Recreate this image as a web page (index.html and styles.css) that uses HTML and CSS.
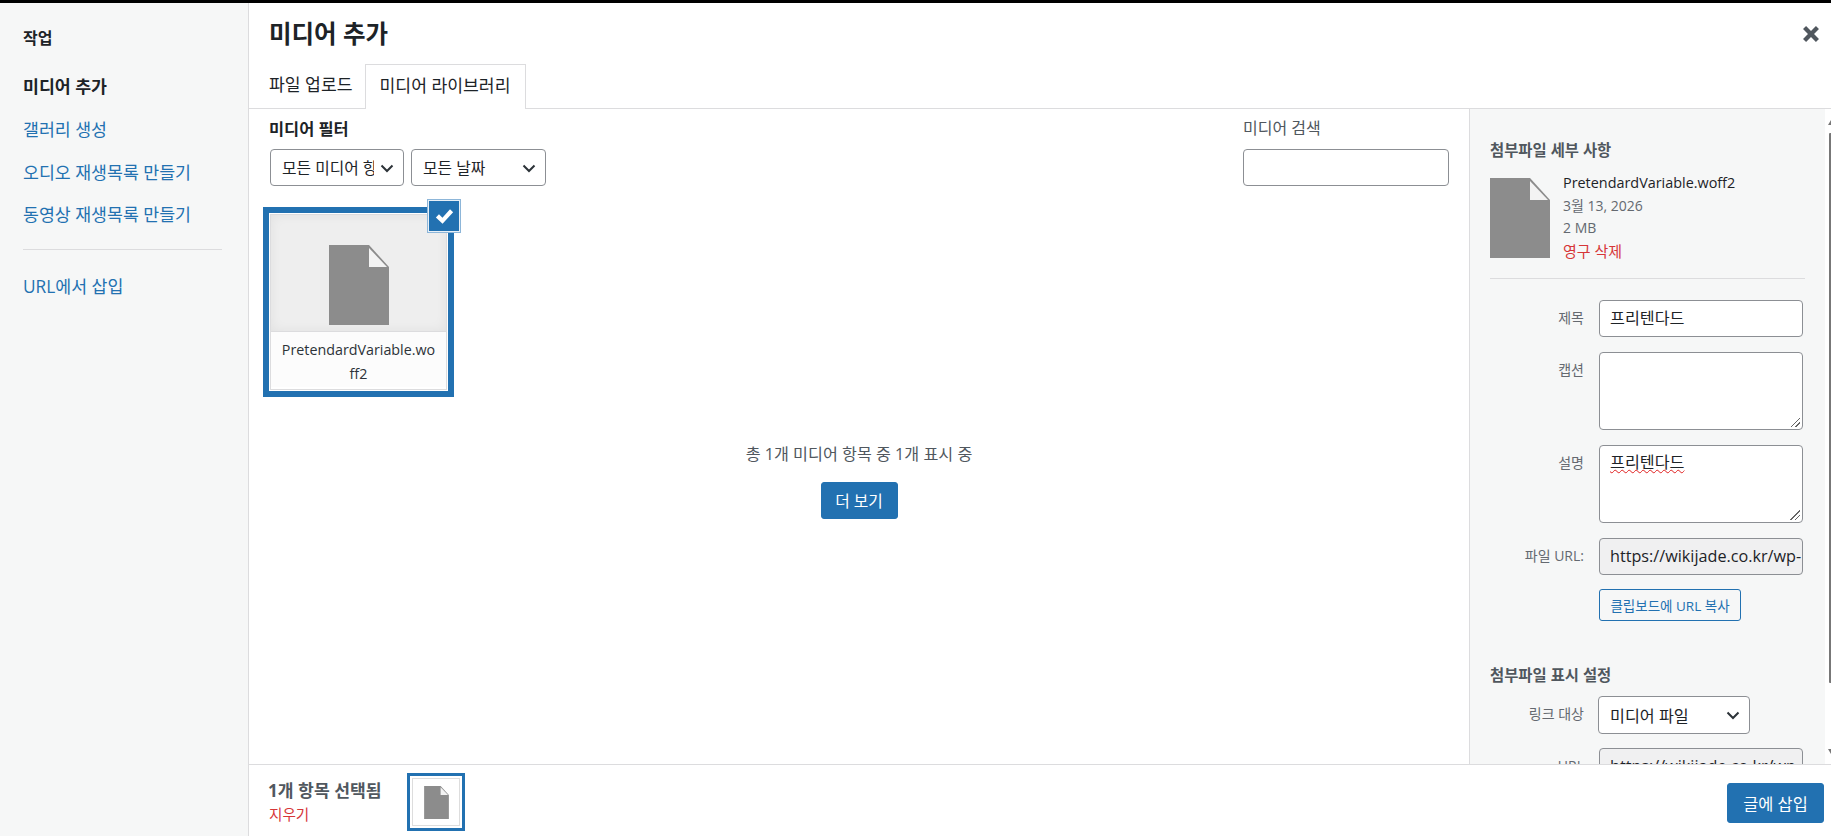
FILE: index.html
```html
<!DOCTYPE html>
<html lang="ko">
<head>
<meta charset="utf-8">
<title>미디어 추가</title>
<link rel="stylesheet" href="styles.css">
</head>
<body>
<div class="modal">
  <nav class="menu">
    <h2 class="menu-title">작업</h2>
    <a class="menu-item active">미디어 추가</a>
    <a class="menu-item">갤러리 생성</a>
    <a class="menu-item">오디오 재생목록 만들기</a>
    <a class="menu-item">동영상 재생목록 만들기</a>
    <div class="menu-sep"></div>
    <a class="menu-item">URL에서 삽입</a>
  </nav>
  <main class="frame">
    <header class="head">
      <h1 class="title">미디어 추가</h1>
      <button class="close" aria-label="닫기"><svg viewBox="0 0 16 16" width="22" height="22"><path d="M2.2 4.4 4.4 2.2 8 5.8l3.6-3.6 2.2 2.2L10.2 8l3.6 3.6-2.2 2.2L8 10.2l-3.6 3.6-2.2-2.2L5.8 8z"/></svg></button>
      <div class="tabs">
        <span class="tab">파일 업로드</span>
        <span class="tab current">미디어 라이브러리</span>
      </div>
    </header>
    <div class="content">
      <section class="browser">
        <div class="toolbar">
          <div class="filters">
            <h2 class="filter-title">미디어 필터</h2>
            <div class="filter-row">
              <div class="select sel-type"><span class="select-text">모든 미디어 항목</span><svg class="chev" viewBox="0 0 16 16"><path d="M2.5 5.5 8 11l5.5-5.5"/></svg></div>
              <div class="select sel-date"><span class="select-text">모든 날짜</span><svg class="chev" viewBox="0 0 16 16"><path d="M2.5 5.5 8 11l5.5-5.5"/></svg></div>
            </div>
          </div>
          <div class="search">
            <label class="search-label">미디어 검색</label>
            <div class="input search-input"></div>
          </div>
        </div>
        <div class="attachment">
          <div class="att-inner">
            <div class="att-preview">
              <svg class="file big" viewBox="0 0 60 80"><path class="f" d="M0 0h40l20 22v58H0z"/><path class="w" d="M40 3v19h18z"/></svg>
            </div>
            <div class="att-name">PretendardVariable.wo<br>ff2</div>
          </div>
          <span class="check"><svg viewBox="0 0 20 20" width="23" height="23"><path d="M2.5 10.8 5.2 8l3 3 6.6-7.3 2.7 2.6-9.2 10z"/></svg></span>
        </div>
        <div class="load-more">
          <p class="count">총 1개 미디어 항목 중 1개 표시 중</p>
          <button class="btn more">더 보기</button>
        </div>
      </section>
      <aside class="details">
        <h2 class="side-title">첨부파일 세부 사항</h2>
        <div class="info">
          <svg class="file info-thumb" viewBox="0 0 60 80"><path class="f" d="M0 0h40l20 22v58H0z"/><path class="w" d="M40 3v19h18z"/></svg>
          <div class="info-text">
            <div class="info-name">PretendardVariable.woff2</div>
            <div class="info-meta">3월 13, 2026</div>
            <div class="info-meta">2 MB</div>
            <a class="danger">영구 삭제</a>
          </div>
        </div>
        <div class="field">
          <label class="lbl">제목</label>
          <div class="input box one">프리텐다드</div>
        </div>
        <div class="field">
          <label class="lbl">캡션</label>
          <div class="input box area"><span class="grip"></span></div>
        </div>
        <div class="field">
          <label class="lbl">설명</label>
          <div class="input box area"><span class="spell">프리텐다드</span><span class="grip"></span></div>
        </div>
        <div class="field">
          <label class="lbl">파일 URL:</label>
          <div class="input box one ro">https://wikijade.co.kr/wp-</div>
        </div>
        <div class="copy-row"><button class="btn-copy">클립보드에 URL 복사</button></div>
        <h2 class="side-title second">첨부파일 표시 설정</h2>
        <div class="field tight">
          <label class="lbl">링크 대상</label>
          <div class="select sel-link"><span class="select-text">미디어 파일</span><svg class="chev" viewBox="0 0 16 16"><path d="M2.5 5.5 8 11l5.5-5.5"/></svg></div>
        </div>
        <div class="field last">
          <label class="lbl">URL</label>
          <div class="input box one ro">https://wikijade.co.kr/wp-</div>
        </div>
      </aside>
      <div class="scrollbar">
        <span class="arrow up"></span>
        <span class="thumb"></span>
        <span class="arrow down"></span>
      </div>
    </div>
    <footer class="foot">
      <div class="sel-info">
        <div class="sel-count">1개 항목 선택됨</div>
        <a class="danger small">지우기</a>
      </div>
      <div class="sel-thumb"><svg class="file" viewBox="0 0 60 80" width="25" height="33"><path class="f" d="M0 0h40l20 22v58H0z"/><path class="w" d="M40 3v19h18z"/></svg></div>
      <button class="btn insert">글에 삽입</button>
    </footer>
  </main>
</div>
</body>
</html>
```
FILE: styles.css
```css
* { box-sizing: border-box; }
html, body { margin: 0; height: 100%; }
body {
  font-family: "Open Sans", "Noto Sans CJK KR", sans-serif;
  font-size: 15px;
  color: #1d2327;
  background: #fff;
  overflow: hidden;
}
h1, h2, p { margin: 0; }
.modal { display: flex; height: 836px; border-top: 3px solid #000; }

.menu { width: 249px; flex: none; background: #f6f7f7; border-right: 1px solid #dcdcde; padding: 24px 26px 0 23px; }
.menu-title { font-size: 16px; font-weight: 700; line-height: 22px; margin-bottom: 26px; }
.menu-item { display: block; font-size: 17.3px; line-height: 24px; color: #2271b1; margin-bottom: 18.8px; }
.menu-item.active { color: #1d2327; font-weight: 700; }
.menu-sep { height: 1px; background: #dcdcde; margin: 22px 0 25px; }

.frame { flex: 1; min-width: 0; display: flex; flex-direction: column; }
.head { position: relative; height: 106px; border-bottom: 1px solid #dcdcde; padding-left: 20px; flex: none; }
.title { font-size: 24.5px; font-weight: 700; line-height: 36px; padding-top: 13px; height: 61px; }
.close { position: absolute; top: 20px; right: 9px; width: 22px; height: 22px; padding: 0; border: 0; background: none; }
.close svg { display: block; fill: #50575e; }
.tabs { display: flex; height: 45px; }
.tab { font-size: 17.2px; line-height: 24px; padding: 9px 13px 0 0; height: 45px; }
.tab.current { padding: 9px 14px 0; background: #fff; border: 1px solid #dcdcde; border-bottom: 0; margin-left: -1px; }

.content { flex: 1; min-height: 0; display: flex; overflow: hidden; }
.browser { flex: 1; min-width: 0; }
.toolbar { display: flex; justify-content: space-between; padding: 0 20px 0 21px; height: 92px; }
.filter-title { font-size: 16.4px; font-weight: 700; line-height: 22px; padding-top: 9px; height: 40px; margin-left: -1px; }
.filter-row { display: flex; gap: 7px; }
.select { display: flex; align-items: center; height: 37px; border: 1px solid #8c8f94; border-radius: 4px; background: #fff; font-size: 15.8px; padding: 0 8px 0 11px; }
.select-text { flex: 1; min-width: 0; white-space: nowrap; overflow: hidden; }
.chev { width: 16px; height: 16px; flex: none; fill: none; stroke: #2c3338; stroke-width: 2; margin-left: 5px; }
.sel-type { width: 134px; }
.sel-date { width: 135px; }
.search { width: 206px; padding-top: 8px; }
.search-label { display: block; font-size: 16px; line-height: 22px; color: #50575e; height: 32px; }
.input { border: 1px solid #8c8f94; border-radius: 4px; background: #fff; }
.search-input { height: 37px; }

.attachment { position: relative; width: 191px; height: 190px; border: 6px solid #2271b1; margin: 6px 0 0 14px; background: #fff; }
.att-inner { height: 100%; border: 1px solid #fff; outline: 1px solid #dcdcde; outline-offset: -2px; padding: 1px; }
.att-preview { height: 117px; background: #eee; box-shadow: inset 0 0 12px rgba(0,0,0,.06); display: flex; align-items: flex-end; justify-content: center; padding-bottom: 6px; border-bottom: 1px solid #dcdcde; }
.att-name { font-size: 14.3px; font-weight: 500; text-align: center; line-height: 23.5px; padding-top: 6px; background: #fcfcfc; height: 55px; color: #2c3338; }
.file .f { fill: #8c8c8c; }
.file .w { fill: #f3f3f3; }
.big { width: 60px; height: 80px; }
.check { position: absolute; top: -14px; right: -13px; width: 34px; height: 34px; background: #2271b1; border: 1px solid #8db6d9; box-shadow: inset 0 0 0 1px #e8f0f7; display: flex; align-items: center; justify-content: center; }
.check svg { fill: #fff; }

.load-more { text-align: center; padding-top: 46px; }
.count { font-size: 16.2px; line-height: 22px; color: #50575e; }
.btn { background: #2271b1; color: #fff; border: 1px solid #2271b1; border-radius: 3px; font: inherit; }
.more { width: 77px; height: 37px; font-size: 15.8px; margin-top: 17px; }

.details { width: 356px; flex: none; background: #f6f7f7; border-left: 1px solid #dcdcde; padding: 0 20px; overflow: hidden; }
.side-title { font-size: 15.4px; font-weight: 700; line-height: 20px; color: #50575e; padding-top: 32px; }
.info { display: flex; gap: 13px; padding: 17px 0 15px; border-bottom: 1px solid #dcdcde; }
.info-thumb { width: 60px; height: 80px; flex: none; }
.info-text { font-size: 14px; line-height: 22.5px; margin-top: -6px; }
.info-name { font-weight: 500; font-size: 14.4px; }
.info-meta { color: #646970; }
.danger { color: #d63638; }
.info-text .danger { font-size: 15px; }
.field { display: flex; gap: 15px; margin-top: 15px; }
.info + .field { margin-top: 21px; }
.lbl { width: 94px; flex: none; text-align: right; font-size: 14px; color: #646970; line-height: 20px; padding-top: 8px; white-space: nowrap; }
.box { width: 204px; font-size: 16.2px; padding: 0 10px; white-space: nowrap; overflow: hidden; position: relative; }
.one { height: 37px; line-height: 35px; }
.area { height: 78px; line-height: 24px; padding-top: 4px; }
.ro { background: #f0f0f1; }
.spell { text-decoration: underline wavy #e02020 1px; }
.grip { position: absolute; right: 2px; bottom: 2px; width: 10px; height: 10px; background: linear-gradient(135deg, transparent 50%, #666 50%, #666 58%, transparent 58%, transparent 72%, #666 72%, #666 80%, transparent 80%); }
.copy-row { padding: 14px 0 0 109px; }
.btn-copy { width: 142px; height: 32px; padding: 0; font: inherit; font-size: 13.5px; color: #2271b1; background: #f6f7f7; border: 1px solid #2271b1; border-radius: 3px; white-space: nowrap; }
.side-title.second { padding-top: 45px; }
.tight { margin-top: 10px; gap: 14px; }
.last { margin-top: 14px; }
.sel-link { width: 152px; font-size: 16.2px; height: 38px; }

.scrollbar { flex: none; width: 6px; background: #fff; display: flex; flex-direction: column; align-items: flex-end; padding-top: 11px; }
.arrow { width: 0; height: 0; border-left: 3px solid transparent; border-right: 0 solid transparent; }
.arrow.up { border-bottom: 5px solid #777; }
.arrow.down { border-top: 5px solid #777; margin-top: 66px; }
.thumb { width: 2px; height: 550px; margin-top: 8px; background: #777; border-radius: 1px 0 0 1px; }

.foot { height: 72px; flex: none; display: flex; align-items: flex-start; border-top: 1px solid #dcdcde; padding: 0 7px 0 19px; background: #fff; }
.sel-info { width: 139px; padding-top: 14px; }
.sel-count { font-size: 17.2px; font-weight: 700; line-height: 24px; color: #50575e; }
.small { font-size: 14.6px; line-height: 22px; display: block; padding-left: 1px; }
.sel-thumb { width: 58px; height: 58px; margin-top: 8px; border: 3px solid #2271b1; display: flex; align-items: center; justify-content: center; background: #fff; box-shadow: inset 0 0 0 2px #fff, inset 0 0 0 3px #ddd; }
.insert { margin: 18px 0 0 auto; width: 97px; height: 40px; font-size: 16.4px; }
```
